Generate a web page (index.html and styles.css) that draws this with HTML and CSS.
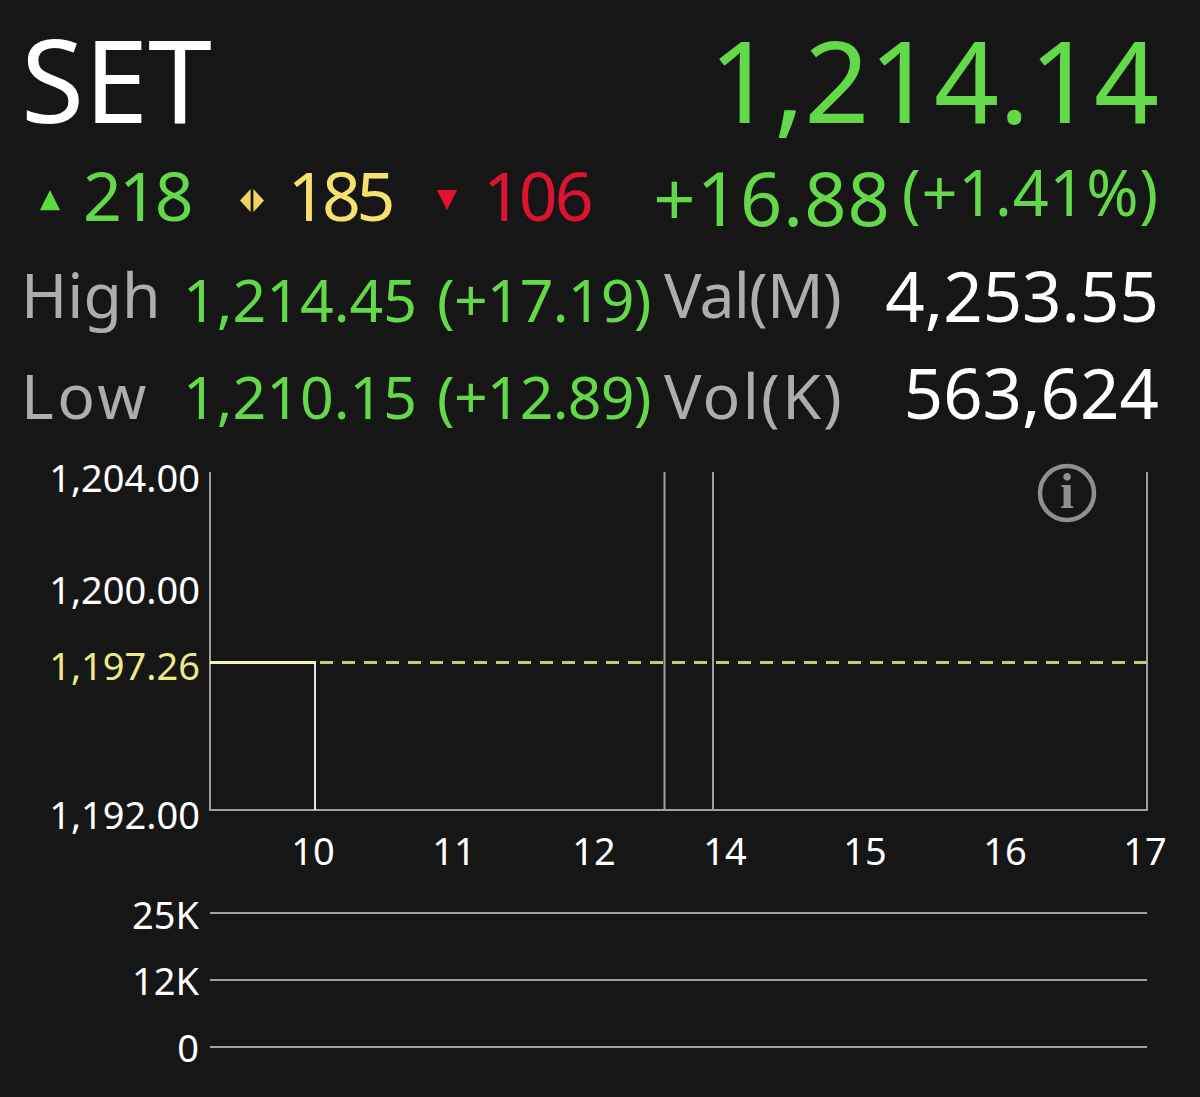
FILE: index.html
```html
<!DOCTYPE html>
<html lang="en">
<head>
<meta charset="utf-8">
<title>SET</title>
<link rel="stylesheet" href="styles.css">
</head>
<body>
<main class="panel">
  <header class="quote">
    <div class="title-row">
      <span class="symbol">SET</span>
      <span class="last up">1,214.14</span>
    </div>
    <div class="breadth-row">
      <div class="breadth">
        <span class="count up">
          <svg class="mark" viewBox="0 0 26 26"><path d="M13 1 24 23H2z" fill="#5ed93e"/></svg>218
        </span>
        <span class="count flat">
          <svg class="mark" viewBox="0 0 26 26"><path d="M11.500 0v25L0 12.500zM14.500 0v25L26 12.500z" fill="#f0d264"/></svg>185
        </span>
        <span class="count down">
          <svg class="mark" viewBox="0 0 26 26"><path d="M13 23 2 1h22z" fill="#e0122f"/></svg>106
        </span>
      </div>
      <div class="change up">
        <span class="change-abs">+16.88</span>
        <span class="change-pct">(+1.41%)</span>
      </div>
    </div>
    <div class="stats">
      <span class="stat-label stat-high">High</span>
      <span class="stat-value up">1,214.45</span>
      <span class="stat-diff up">(+17.19)</span>
      <span class="stat-label stat-high stat-val">Val(M)</span>
      <span class="stat-total">4,253.55</span>
      <span class="stat-label stat-low">Low</span>
      <span class="stat-value up">1,210.15</span>
      <span class="stat-diff up">(+12.89)</span>
      <span class="stat-label stat-vol">Vol(K)</span>
      <span class="stat-total">563,624</span>
    </div>
  </header>
  <svg class="chart" viewBox="0 450 1200 647" width="1200" height="647">
    <g class="axis-label">
      <text x="200" y="492">1,204.00</text>
      <text x="200" y="604">1,200.00</text>
      <text x="200" y="680" class="prior">1,197.26</text>
      <text x="200" y="829">1,192.00</text>
      <text x="199" y="929">25K</text>
      <text x="199" y="995">12K</text>
      <text x="199" y="1062">0</text>
    </g>
    <g class="time-label">
      <text x="313" y="865">10</text>
      <text x="454" y="865">11</text>
      <text x="594" y="865">12</text>
      <text x="725" y="865">14</text>
      <text x="865" y="865">15</text>
      <text x="1005" y="865">16</text>
      <text x="1145" y="865">17</text>
    </g>
    <path class="grid" d="M210 472V810H1147V472M664.500 472V810M713 472V810"/>
    <path class="grid" d="M210 913H1147M210 980H1147M210 1047H1147"/>
    <path class="price" d="M315 662V810"/>
    <path class="prior-solid" d="M210 662.500H316"/>
    <path class="prior-dash" d="M320 662.500H1147"/>
    <g class="info">
      <circle cx="1067" cy="493" r="27"/>
      <text x="1067" y="508">i</text>
    </g>
  </svg>
</main>
</body>
</html>
```
FILE: styles.css
```css
html, body {
  margin: 0;
  padding: 0;
  background: #161616;
}
.panel {
  width: 1200px;
  height: 1097px;
  overflow: hidden;
  background: #161616;
  font-family: "Noto Sans", sans-serif;
  color: #fff;
}
.quote {
  height: 450px;
  box-sizing: border-box;
  padding: 14px 41px 0 21px;
}
.up { color: #63d94a; }
.flat { color: #f6e06e; }
.down { color: #dc1431; }
.title-row {
  display: flex;
  justify-content: space-between;
  align-items: baseline;
  height: 130px;
  line-height: 130px;
}
.symbol {
  font-size: 115px;
  font-weight: 400;
  color: #fff;
}
.last {
  font-size: 114px;
  font-weight: 400;
  letter-spacing: -0.300px;
}
.breadth-row {
  display: flex;
  justify-content: space-between;
  align-items: flex-start;
  height: 90px;
  margin-top: 9px;
}
.breadth {
  display: flex;
  gap: 44px;
  padding-left: 17px;
}
.count {
  display: flex;
  align-items: flex-start;
  gap: 21px;
  font-size: 68px;
  font-weight: 400;
  line-height: 84px;
  letter-spacing: -3px;
}
.count.flat {
  margin-left: 5px;
  gap: 24px;
  letter-spacing: -4.500px;
}
.count.down { gap: 24px; }
.mark {
  width: 24px;
  height: 24px;
  margin-top: 36px;
}
.change {
  display: flex;
  gap: 11px;
  align-items: flex-start;
}
.change-abs {
  font-size: 74px;
  font-weight: 400;
  letter-spacing: 1px;
  line-height: 90px;
}
.change-pct {
  font-size: 63px;
  font-weight: 400;
  letter-spacing: 0.750px;
  line-height: 78px;
}
.stats {
  display: grid;
  grid-template-columns: 162px 254px 227px 1fr auto;
  grid-auto-rows: 97px;
  align-items: baseline;
  line-height: 97px;
  margin-top: 4px;
}
.stat-label {
  font-size: 62.500px;
  font-weight: 400;
  color: #adadad;
}
.stat-high {
  align-self: start;
  line-height: 94px;
}
.stat-val { letter-spacing: -0.800px; }
.stat-low { letter-spacing: 3.500px; }
.stat-vol { letter-spacing: 2.300px; }
.stat-value,
.stat-diff {
  font-size: 59px;
  font-weight: 400;
}
.stat-diff { letter-spacing: -0.800px; }
.stat-total {
  font-size: 69px;
  font-weight: 400;
  color: #fff;
  justify-self: end;
}
.axis-label text {
  font-size: 38px;
  font-weight: 400;
  fill: #fff;
  text-anchor: end;
}
.axis-label .prior { fill: #ecea84; }
.time-label text {
  font-size: 38px;
  font-weight: 400;
  fill: #fff;
  text-anchor: middle;
}
.grid {
  fill: none;
  stroke: #a0a0a0;
  stroke-width: 2;
}
.price {
  fill: none;
  stroke: #e4e4e4;
  stroke-width: 2;
}
.prior-solid {
  fill: none;
  stroke: #f8f4b8;
  stroke-width: 3;
}
.prior-dash {
  fill: none;
  stroke: #c9c678;
  stroke-width: 3;
  stroke-dasharray: 13 9;
}
.info circle {
  fill: none;
  stroke: #8f8f8f;
  stroke-width: 4.500;
}
.info text {
  font-family: "Liberation Serif", serif;
  font-size: 50px;
  font-weight: 700;
  fill: #8f8f8f;
  text-anchor: middle;
}
```
